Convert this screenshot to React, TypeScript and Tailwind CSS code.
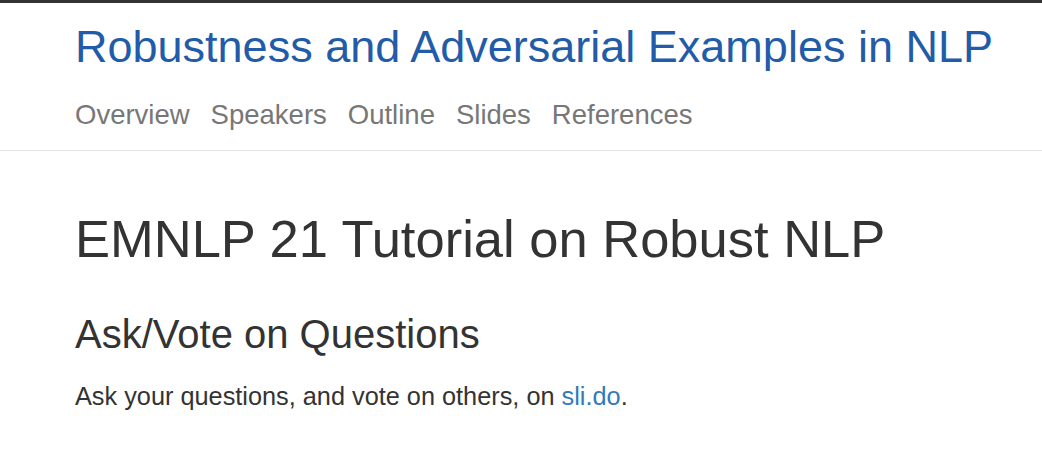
const navItems = ['Overview', 'Speakers', 'Outline', 'Slides', 'References'];

export default function App() {
  return (
    <div className="min-h-[470px] bg-white font-['Liberation_Sans',Arial,sans-serif]">
      {/* top bar */}
      <div className="h-[3px] bg-[#333]" />

      {/* header */}
      <header className="border-b border-[#e5e5e5] px-[75px] pt-[21px] pb-[21px]">
        <h1 className="text-[45px] leading-[45px] text-[#225ca8] whitespace-nowrap">
          Robustness and Adversarial Examples in NLP
        </h1>
        <nav className="mt-[32px] flex gap-[21px] pb-px text-[27.5px] leading-[27px] text-[#777]">
          {navItems.map((item) => (
            <a key={item} href="#">
              {item}
            </a>
          ))}
        </nav>
      </header>

      {/* main */}
      <main className="px-[75px] text-[#333]">
        <h1 className="mt-[62px] text-[52.5px] leading-[52px] whitespace-nowrap">
          EMNLP 21 Tutorial on Robust NLP
        </h1>
        <h2 className="mt-[49px] text-[40px] leading-[40px]">Ask/Vote on Questions</h2>
        <p className="mt-[30px] text-[25.3px] leading-[25px]">
          Ask your questions, and vote on others, on{' '}
          <a href="#" className="text-[#337ab7]">
            sli.do
          </a>
          .
        </p>
      </main>
    </div>
  );
}
